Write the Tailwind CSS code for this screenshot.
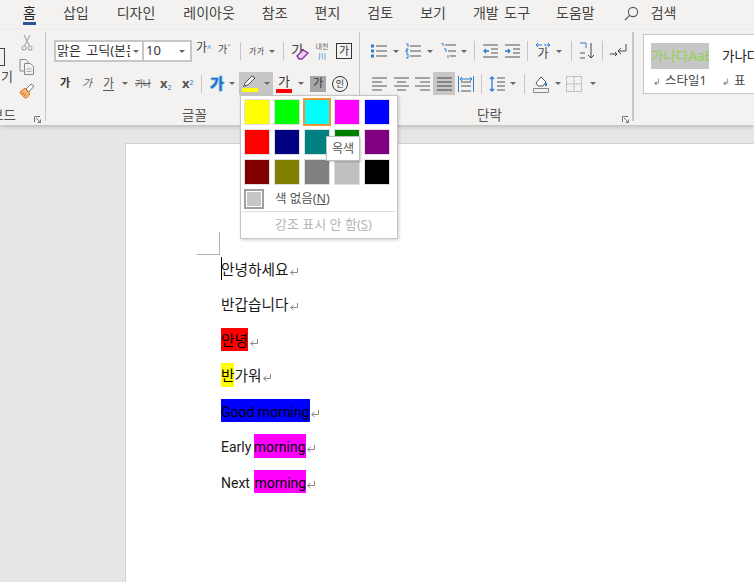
<!DOCTYPE html>
<html lang="ko">
<head>
<meta charset="UTF-8" />
<title>Word</title>
<script src="https://cdn.jsdelivr.net/npm/@tailwindcss/browser@4"></script>
</head>
<body class="w-[754px] h-[582px] overflow-hidden bg-[#e6e6e6] text-[#444] font-['Noto_Sans','Noto_Sans_CJK_KR',sans-serif]">
<svg class="hidden">
  <symbol id="caret" viewBox="0 0 6 3"><polygon points="0,0 6,0 3,3" fill="#666"/></symbol>
  <symbol id="para" viewBox="0 0 10 9"><path d="M8.500 1v4.500H2M4.500 3 1.500 5.500l3 2.500" fill="none" stroke="#8a8a8a"/></symbol>
</svg>

<div class="relative w-[754px] h-[582px] overflow-hidden flex flex-col">

  <!-- Tabs -->
  <div class="h-[30px] shrink-0 bg-[#f3f2f1] flex items-center pl-[23px] gap-[27px] text-[14px] leading-[18px] text-[#444] pb-[4px] whitespace-nowrap [word-spacing:2px]">
    <span class="relative text-[#222]">홈<span class="absolute left-0 right-0 top-[18px] h-[3px] bg-[#2b579a]"></span></span>
    <span>삽입</span><span class="ml-[1px]">디자인</span><span class="ml-[1px]">레이아웃</span><span>참조</span><span>편지</span><span>검토</span><span>보기</span><span>개발 도구</span><span class="ml-[-1px]">도움말</span>
    <span class="flex items-center gap-[12px] ml-[2px]">
      <svg width="15" height="15" viewBox="0 0 15 15" fill="none" stroke="#555" stroke-width="1.1"><circle cx="9" cy="6" r="4.6"/><path d="M5.600 9.400 1 14"/></svg>
      <span>검색</span>
    </span>
  </div>

  <!-- Ribbon -->
  <div class="h-[95px] shrink-0 bg-[#f3f2f1] flex pt-[2px] shadow-[0_2px_4px_rgba(0,0,0,0.18)] z-10">

    <!-- Clipboard -->
    <div class="w-[46px] h-[89px] shrink-0 border-r border-[#c8c6c4] relative">
      <div class="absolute left-0 top-[16px] w-[5px] h-[18px] border border-l-0 border-[#444]"></div>
      <span class="absolute left-[1px] top-[35px] text-[13px] leading-[18px]">기</span>
      <div class="absolute left-[19px] top-[3px] flex flex-col gap-[8px]">
        <svg width="16" height="16" viewBox="0 0 16 16" fill="none" stroke="#a6a6a6" stroke-width="1.1"><path d="M5 0 10.500 11M11 0 5.500 11"/><circle cx="5" cy="13" r="2"/><circle cx="11" cy="13" r="2"/></svg>
        <svg width="16" height="16" viewBox="0 0 16 16" fill="none" stroke="#8a8a8a"><path d="M1 .5h6l2 2v9.500H1z"/><path d="M5.500 4.500h6l3 3v8h-9z" fill="#f3f2f1"/><path d="M7.500 10h5M7.500 12.500h5" stroke="#aaa"/></svg>
        <svg width="16" height="16" viewBox="0 0 16 16"><path d="M1 9l5-4 5 6-4 4.500C5 14 2 12 1 9z" fill="#f5b26a" stroke="#d9772a"/><path d="M7 6l5-5 3 2-5 6z" fill="#fff" stroke="#777"/><path d="M3 11l2-1M5 13l2-2" stroke="#d9772a"/></svg>
      </div>
      <span class="absolute left-[-9px] top-[75px] text-[13.500px] leading-[16px] text-[#555] whitespace-nowrap">보드</span>
      <svg class="absolute left-[34px] top-[84px]" width="7" height="7" viewBox="0 0 7 7" fill="none" stroke="#777"><path d="M.5 6V.5H6M2 2l4.500 4.500M6.500 3.500v3h-3"/></svg>
    </div>

    <!-- Font -->
    <div class="w-[314px] h-[89px] shrink-0 border-r border-[#c8c6c4] relative text-[#444]">
      <div class="flex items-center pl-[8px] pt-[8px] h-[30px]">
        <div class="w-[90px] h-[22px] bg-white border-2 border-[#c8c6c4] flex items-center pl-[1px] text-[13px] text-[#333] overflow-hidden whitespace-nowrap">
          <span class="w-[73px] overflow-hidden [word-spacing:2px]">맑은 고딕(본문)</span>
          <svg class="ml-[3px]" width="6" height="3"><use href="#caret"/></svg>
        </div>
        <div class="w-[48px] h-[22px] bg-white border-2 border-l-0 border-[#c8c6c4] flex items-center pl-[2px] text-[13px] text-[#333]">
          <span class="w-[33px]">10</span>
          <svg width="6" height="3"><use href="#caret"/></svg>
        </div>
        <span class="ml-[4px] w-[16px] text-[12px] leading-[14px] whitespace-nowrap mt-[-6px]">가<span class="text-[#2b7cd3] text-[8px] align-top">^</span></span>
        <span class="ml-[6px] w-[16px] text-[10px] leading-[14px] whitespace-nowrap mt-[-4px]">가<span class="text-[#2b7cd3] text-[8px] align-top">ˇ</span></span>
        <span class="ml-[6px] mr-[8px] w-px h-[18px] bg-[#c8c6c4]"></span>
        <span class="text-[8px] w-[18px] whitespace-nowrap tracking-[0.5px]">가가</span>
        <svg class="ml-[2px]" width="6" height="3"><use href="#caret"/></svg>
        <span class="ml-[8px] mr-[7px] w-px h-[18px] bg-[#c8c6c4]"></span>
        <span class="relative w-[18px] h-[20px] text-[14px] leading-[18px]">가<svg class="absolute left-[5px] top-[8px]" width="13" height="11" viewBox="0 0 13 11"><path d="M1 7 7 1l5 3-6 6H3z" fill="#e8d2ee" stroke="#8e3a9d" stroke-width="1.400"/></svg></span>
        <span class="ml-[4px] w-[18px] flex flex-col items-center text-[7px] leading-[9px] text-[#666] whitespace-nowrap">내천<span class="text-[#2b7cd3] text-[8px] leading-[9px]">川</span></span>
        <span class="ml-[5px] w-[16px] h-[16px] border border-[#333] flex items-center justify-center text-[11px] text-[#333]">가</span>
      </div>
      <div class="flex items-center h-[23px] mt-[10px] relative">
        <span class="ml-[14px] w-[12px] text-[11px] font-bold text-[#333]">가</span>
        <span class="ml-[10px] w-[12px] text-[11px] italic text-[#666]">가</span>
        <span class="ml-[9px] w-[13px] text-[12px] underline underline-offset-2 text-[#555]">가</span>
        <svg class="ml-[6px]" width="6" height="3"><use href="#caret"/></svg>
        <span class="ml-[7px] w-[15px] text-[9px] line-through tracking-[-0.5px] text-[#555] whitespace-nowrap">가나</span>
        <span class="ml-[10px] w-[12px] text-[13px] font-bold leading-none text-[#555]">x<sub class="text-[#2b7cd3] text-[7px] font-normal">2</sub></span>
        <span class="ml-[10px] w-[12px] text-[13px] font-bold leading-none text-[#555]">x<sup class="text-[#2b7cd3] text-[7px] font-normal">2</sup></span>
        <span class="ml-[7px] mr-[8px] w-px h-[18px] bg-[#c8c6c4]"></span>
        <span class="w-[16px] text-[15px] font-bold text-[#1f6fc4] leading-none [text-shadow:1px_0_#9ccbf2,-1px_0_#9ccbf2,0_1px_#9ccbf2,0_-1px_#9ccbf2]">가</span>
        <svg class="ml-[3px]" width="6" height="3"><use href="#caret"/></svg>
        <!-- highlight button -->
        <div class="ml-[4px] w-[34px] h-[23px] bg-[#c8c6c4] flex items-center pl-[3px]">
          <span class="flex flex-col w-[16px]">
            <svg width="16" height="13" viewBox="0 0 16 13" fill="none" stroke="#555"><path d="M2 11l1-3 7-7 3 2-7 7z" fill="#eee"/><path d="M2 11l-1 1"/></svg>
            <span class="h-[4px] bg-[#ffff00]"></span>
          </span>
          <svg class="ml-[6px]" width="6" height="3"><use href="#caret"/></svg>
        </div>
        <span class="ml-[3px] w-[16px] flex flex-col items-center text-[13px] leading-[14px] text-[#333]">가<span class="w-[16px] h-[4px] bg-[#ff0000] mt-[1px]"></span></span>
        <svg class="ml-[6px]" width="6" height="3"><use href="#caret"/></svg>
        <span class="ml-[6px] w-[16px] h-[16px] bg-[#a6a6a6] flex items-center justify-center text-[11px] text-[#333]">가</span>
        <span class="ml-[6px] w-[16px] h-[16px] rounded-full border border-[#333] flex items-center justify-center text-[9px] text-[#333]">인</span>
      </div>
      <span class="absolute left-[136px] top-[75px] text-[13.500px] leading-[16px] text-[#555]">글꼴</span>
    </div>

    <!-- Paragraph -->
    <div class="w-[274px] h-[89px] shrink-0 border-r-2 border-[#c8c6c4] relative">
      <div class="flex items-center pl-[11px] pt-[8px] h-[30px]">
        <svg width="16" height="16" viewBox="0 0 16 16"><path d="M0 1.500h3v3H0zM0 6.500h3v3H0zM0 11.500h3v3H0z" fill="#2b7cd3"/><path d="M5 3h11M5 8h11M5 13h11" stroke="#555"/></svg>
        <svg class="ml-[6px]" width="6" height="3"><use href="#caret"/></svg>
        <svg class="ml-[6px]" width="16" height="16" viewBox="0 0 16 16"><path d="M1 1h2v3M1 6h2v1H1v2h2M1 11h2v4H1" stroke="#2b7cd3" fill="none"/><path d="M5 3h11M5 8h11M5 13h11" stroke="#555"/></svg>
        <svg class="ml-[6px]" width="6" height="3"><use href="#caret"/></svg>
        <svg class="ml-[7px]" width="16" height="16" viewBox="0 0 16 16"><path d="M1 0h2v3M4 6h2v3M8 12v3" stroke="#2b7cd3" fill="none"/><path d="M5 2h11M8 8h8M10 13h6" stroke="#555"/></svg>
        <svg class="ml-[5px]" width="6" height="3"><use href="#caret"/></svg>
        <span class="ml-[7px] mr-[8px] w-px h-[20px] bg-[#c8c6c4]"></span>
        <svg width="16" height="14" viewBox="0 0 16 14" fill="none"><path d="M0 1h15M8 5h7M8 9h7M0 13h15" stroke="#555"/><path d="M6 7H1M3 5 1 7l2 2" stroke="#2b7cd3" stroke-width="1.300"/></svg>
        <svg class="ml-[6px]" width="16" height="14" viewBox="0 0 16 14" fill="none"><path d="M0 1h15M8 5h7M8 9h7M0 13h15" stroke="#555"/><path d="M0 7h5M3 5l2 2-2 2" stroke="#2b7cd3" stroke-width="1.300"/></svg>
        <span class="ml-[6px] mr-[7px] w-px h-[20px] bg-[#c8c6c4]"></span>
        <span class="relative w-[16px] h-[18px] text-[12px] leading-[12px] pt-[6px] text-center text-[#444]">가<svg class="absolute left-0 top-0" width="16" height="6" viewBox="0 0 16 6" fill="none" stroke="#2b7cd3"><path d="M7 3H1M3 1 1 3l2 2M9 3h6M13 1l2 2-2 2"/></svg></span>
        <svg class="ml-[5px]" width="6" height="3"><use href="#caret"/></svg>
        <span class="ml-[9px] mr-[7px] w-px h-[20px] bg-[#c8c6c4]"></span>
        <svg width="16" height="18" viewBox="0 0 16 18" fill="none"><path d="M1 1h6v5" stroke="#2b7cd3"/><path d="M1 11h5M1 16h5" stroke="#555"/><path d="M12 1v15M9 13l3 3 3-3" stroke="#444"/></svg>
        <span class="ml-[7px] mr-[7px] w-px h-[20px] bg-[#c8c6c4]"></span>
        <svg width="18" height="16" viewBox="0 0 18 16" fill="none" stroke="#444"><path d="M16 1v7H8M11 5 8 8l3 3"/><path d="M0 11h7M5 9l2 2-2 2"/></svg>
      </div>
      <div class="flex items-center h-[23px] mt-[10px] pl-[12px]">
        <svg width="15" height="14" viewBox="0 0 15 14" stroke="#555"><path d="M0 1h15M0 5h10M0 9h15M0 13h10"/></svg>
        <svg class="ml-[7px]" width="15" height="14" viewBox="0 0 15 14" stroke="#555"><path d="M0 1h15M3 5h9M0 9h15M3 13h9"/></svg>
        <svg class="ml-[6px]" width="15" height="14" viewBox="0 0 15 14" stroke="#555"><path d="M0 1h15M5 5h10M0 9h15M5 13h10"/></svg>
        <div class="ml-[3px] w-[22px] h-[23px] bg-[#c8c6c4] flex items-center justify-center"><svg width="15" height="14" viewBox="0 0 15 14" stroke="#444"><path d="M0 1h15M0 5h15M0 9h15M0 13h15"/></svg></div>
        <svg class="ml-[3px]" width="16" height="16" viewBox="0 0 16 16" fill="none"><path d="M3 6h10M3 10h10M3 15h10" stroke="#555"/><path d="M.5 0v16M15.500 0v16" stroke="#2b7cd3"/><path d="M2 3h12M4 1 2 3l2 2M12 1l2 2-2 2" stroke="#2b7cd3"/></svg>
        <span class="ml-[7px] mr-[7px] w-px h-[20px] bg-[#c8c6c4]"></span>
        <svg width="16" height="16" viewBox="0 0 16 16" fill="none"><path d="M3 1v14M1 3l2-2 2 2M1 13l2 2 2-2" stroke="#2b7cd3" stroke-width="1.300"/><path d="M8 2h8M8 6h8M8 10h8M8 14h8" stroke="#555"/></svg>
        <svg class="ml-[5px]" width="6" height="3"><use href="#caret"/></svg>
        <span class="ml-[8px] mr-[8px] w-px h-[20px] bg-[#c8c6c4]"></span>
        <svg width="16" height="18" viewBox="0 0 16 18" fill="none"><path d="M3 8l5-6 5 5-3 4H5z" fill="#fff" stroke="#555"/><path d="M13 8v3" stroke="#2b7cd3" stroke-width="2"/><path d="M.5 13.500h15v4H.500z" stroke="#888"/></svg>
        <svg class="ml-[6px]" width="6" height="3"><use href="#caret"/></svg>
        <svg class="ml-[5px]" width="16" height="16" viewBox="0 0 16 16" fill="none" stroke="#aaa" stroke-dasharray="2 1"><path d="M.5.500h15v15H.500zM.5 8h15M8 .5v15"/></svg>
        <svg class="ml-[8px]" width="6" height="3"><use href="#caret"/></svg>
      </div>
      <span class="absolute left-[117px] top-[75px] text-[13.500px] leading-[16px] text-[#555]">단락</span>
      <svg class="absolute left-[262px] top-[84px]" width="7" height="7" viewBox="0 0 7 7" fill="none" stroke="#777"><path d="M.5 6V.5H6M2 2l4.500 4.500M6.500 3.500v3h-3"/></svg>
    </div>

    <!-- Styles -->
    <div class="flex-1 pl-[9px] pt-[2px]">
      <div class="h-[60px] bg-white border border-[#c8c6c4] border-r-0 flex pl-[7px] pt-[8px] overflow-hidden">
        <div class="w-[58px] shrink-0 overflow-hidden">
          <div class="h-[26px] bg-[#c6c6c6] text-[#92d050] text-[13.500px] leading-[26px] whitespace-nowrap overflow-hidden">가나다AaE</div>
          <div class="mt-[3px] pl-[2px] text-[12.500px] leading-[18px] whitespace-nowrap text-[#444]"><span class="text-[9px] text-[#777] mr-[4px]">↲</span>스타일1</div>
        </div>
        <div class="ml-[13px] shrink-0">
          <div class="h-[26px] text-[#222] text-[13.500px] leading-[26px] whitespace-nowrap">가나다</div>
          <div class="mt-[3px] text-[12.500px] leading-[18px] whitespace-nowrap text-[#444]"><span class="text-[9px] text-[#777] mr-[4px]">↲</span>표</div>
        </div>
      </div>
    </div>
  </div>

  <!-- Document area -->
  <div class="flex-1 pt-[18px] pl-[125px]">
    <div class="h-[500px] bg-white border-l border-t border-[#d2d2d2] relative pl-[95px] pt-[113px] text-[14.670px] leading-[27px] text-[#1a1a1a] font-['Roboto','Noto_Sans_CJK_KR',sans-serif] whitespace-nowrap">
      <div class="absolute left-[71px] top-[88px] w-[23px] h-[23px] border-r border-b border-[#b0b0b0]"></div>
      <p class="h-[35px] relative"><span class="absolute left-0 top-0 w-px h-[23px] bg-black"></span>안녕하세요<svg class="inline-block ml-px" width="10" height="9"><use href="#para"/></svg></p>
      <p class="h-[36px]">반갑습니다<svg class="inline-block ml-px" width="10" height="9"><use href="#para"/></svg></p>
      <p class="h-[35px]"><span class="inline-block h-[23px] bg-[#ff0000] text-black">안녕</span><svg class="inline-block ml-px" width="10" height="9"><use href="#para"/></svg></p>
      <p class="h-[36px]"><span class="inline-block h-[24px] bg-[#ffff00] text-black">반</span>가워<svg class="inline-block ml-px" width="10" height="9"><use href="#para"/></svg></p>
      <p class="h-[35px] text-[14px]"><span class="inline-block h-[23px] bg-[#0000ff] text-black">Good morning</span><svg class="inline-block" width="10" height="9"><use href="#para"/></svg></p>
      <p class="h-[36px] text-[14px]">Early <span class="inline-block h-[24px] ml-[-1px] bg-[#ff00ff] text-black">morning</span><svg class="inline-block" width="10" height="9"><use href="#para"/></svg></p>
      <p class="h-[36px] text-[14px]">Next <span class="inline-block h-[23px] ml-[1px] bg-[#ff00ff] text-black">morning</span><svg class="inline-block" width="10" height="9"><use href="#para"/></svg></p>
    </div>
  </div>

  <!-- Highlight colour menu -->
  <div class="absolute left-[240px] top-[95px] w-[158px] h-[144px] z-20 bg-white border border-[#c6c6c6] shadow-[1px_1px_3px_rgba(0,0,0,0.2)] pt-[3px] px-[3px]">
    <div class="grid grid-cols-[repeat(5,26px)] gap-[4px]">
      <span class="h-[26px] border border-[#e1dfdd] bg-[#ffff00]"></span>
      <span class="h-[26px] border border-[#e1dfdd] bg-[#00ff00]"></span>
      <span class="h-[26px] border border-[#f29436] bg-[#00ffff] outline outline-[#f29436]"></span>
      <span class="h-[26px] border border-[#e1dfdd] bg-[#ff00ff]"></span>
      <span class="h-[26px] border border-[#e1dfdd] bg-[#0000ff]"></span>
      <span class="h-[26px] border border-[#e1dfdd] bg-[#ff0000]"></span>
      <span class="h-[26px] border border-[#e1dfdd] bg-[#000080]"></span>
      <span class="h-[26px] border border-[#e1dfdd] bg-[#008080]"></span>
      <span class="h-[26px] border border-[#e1dfdd] bg-[#008000]"></span>
      <span class="h-[26px] border border-[#e1dfdd] bg-[#800080]"></span>
      <span class="h-[26px] border border-[#e1dfdd] bg-[#800000]"></span>
      <span class="h-[26px] border border-[#e1dfdd] bg-[#808000]"></span>
      <span class="h-[26px] border border-[#e1dfdd] bg-[#808080]"></span>
      <span class="h-[26px] border border-[#e1dfdd] bg-[#c0c0c0]"></span>
      <span class="h-[26px] border border-[#e1dfdd] bg-[#000000]"></span>
    </div>
    <div class="flex items-center h-[20px] mt-[4px]">
      <span class="w-[20px] h-[20px] border-2 border-[#a0a0a0] bg-[#c6c6c6] outline outline-white outline-offset-[-3px]"></span>
      <span class="ml-[11px] text-[12.500px] leading-[18px] text-[#555]">색 없음(<span class="underline">N</span>)</span>
    </div>
    <div class="h-px bg-[#e1dfdd] mt-[2px] -mx-[1px]"></div>
    <div class="pl-[31px] mt-[3px] text-[13px] leading-[18px] text-[#b5b5b5] whitespace-nowrap">강조 표시 안 함(<span class="underline">S</span>)</div>
  </div>

  <!-- Tooltip -->
  <div class="absolute left-[326px] top-[136px] w-[34px] h-[25px] z-30 bg-white border border-[#bdbdbd] shadow-[1px_1px_2px_rgba(0,0,0,0.2)] flex items-center justify-center text-[12px] text-[#555]">옥색</div>
</div>
</body>
</html>
